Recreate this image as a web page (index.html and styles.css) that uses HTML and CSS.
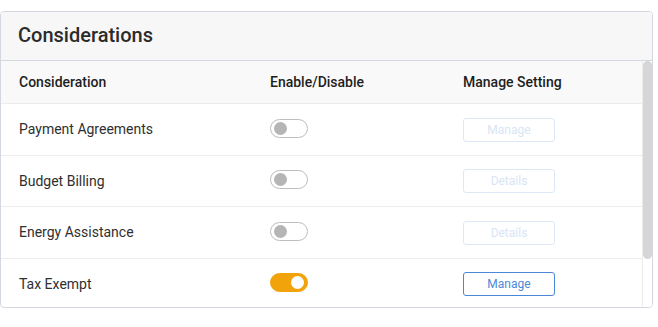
FILE: index.html
```html
<!DOCTYPE html>
<html>
<head>
<meta charset="utf-8">
<link rel="stylesheet" href="styles.css">
</head>
<body>
<div class="card">
  <div class="card-header">Considerations</div>
  <div class="scroll">
    <div class="table">
      <div class="row head">
        <div class="c1">Consideration</div>
        <div class="c2">Enable/Disable</div>
        <div class="c3">Manage Setting</div>
      </div>
      <div class="row">
        <div class="c1">Payment Agreements</div>
        <div class="c2"><span class="toggle"></span></div>
        <div class="c3"><button class="btn disabled">Manage</button></div>
      </div>
      <div class="row">
        <div class="c1">Budget Billing</div>
        <div class="c2"><span class="toggle"></span></div>
        <div class="c3"><button class="btn disabled">Details</button></div>
      </div>
      <div class="row">
        <div class="c1">Energy Assistance</div>
        <div class="c2"><span class="toggle"></span></div>
        <div class="c3"><button class="btn disabled">Details</button></div>
      </div>
      <div class="row">
        <div class="c1">Tax Exempt</div>
        <div class="c2"><span class="toggle on"></span></div>
        <div class="c3"><button class="btn">Manage</button></div>
      </div>
    </div>
    <div class="scrollbar"><div class="thumb"></div></div>
  </div>
</div>
</body>
</html>
```
FILE: styles.css
```css
* { box-sizing: border-box; }
html, body { margin: 0; padding: 0; background: #fff; }
body {
  padding-top: 11px;
  font-family: Roboto, "Liberation Sans", sans-serif;
  color: #2f2f2f;
}
.card {
  width: 653px;
  height: 297px;
  border: 1px solid #d3d8df;
  border-radius: 4px;
  overflow: hidden;
  display: flex;
  flex-direction: column;
}
.card-header {
  height: 49px;
  flex: none;
  background: #f7f7f7;
  border-bottom: 1px solid #d3d8df;
  padding: 0 17px;
  display: flex;
  align-items: center;
  font-size: 20px;
  font-weight: 500;
  color: #2b2b2b;
  padding-bottom: 2px;
}
.scroll {
  flex: 1;
  min-height: 0;
  display: flex;
  overflow: hidden;
}
.table { flex: 1; min-width: 0; }
.scrollbar {
  flex: none;
  width: 10px;
  border-left: 1px solid #ececec;
  background: #fff;
}
.thumb {
  height: 198px;
  background: #d6d6d6;
  border-radius: 5px;
}
.row {
  display: grid;
  grid-template-columns: 251px 193px 1fr;
  align-items: center;
  height: 51.5px;
  border-bottom: 1px solid #ececec;
  font-size: 14px;
  color: #2f2f2f;
  padding-left: 18px;
}
.row.head {
  height: 43px;
  background: #f9f9f9;
  font-weight: 500;
  color: #1e1e1e;
}
.c1, .c2, .c3 { display: flex; align-items: center; }
.toggle {
  display: inline-block;
  position: relative;
  width: 38px;
  height: 19px;
  border: 1px solid #bdbdbd;
  border-radius: 10px;
  background: #fff;
  margin-top: -2px;
}
.toggle::after {
  content: "";
  position: absolute;
  left: 3px;
  top: 2px;
  width: 13px;
  height: 13px;
  border-radius: 50%;
  background: #b5b5b5;
}
.toggle.on {
  background: #f0a30a;
  border-color: #f0a30a;
}
.toggle.on::after {
  left: auto;
  right: 3px;
  background: #fff;
}
.btn {
  width: 92px;
  height: 24px;
  border: 1px solid #4a88d6;
  border-radius: 3px;
  background: #fff;
  color: #4a8ad9;
  font-family: Roboto, "Liberation Sans", sans-serif;
  font-size: 12px;
  padding: 0;
  margin-top: 1px;
}
.btn.disabled {
  border-color: #dde8f6;
  color: #d8e5f5;
}
```
